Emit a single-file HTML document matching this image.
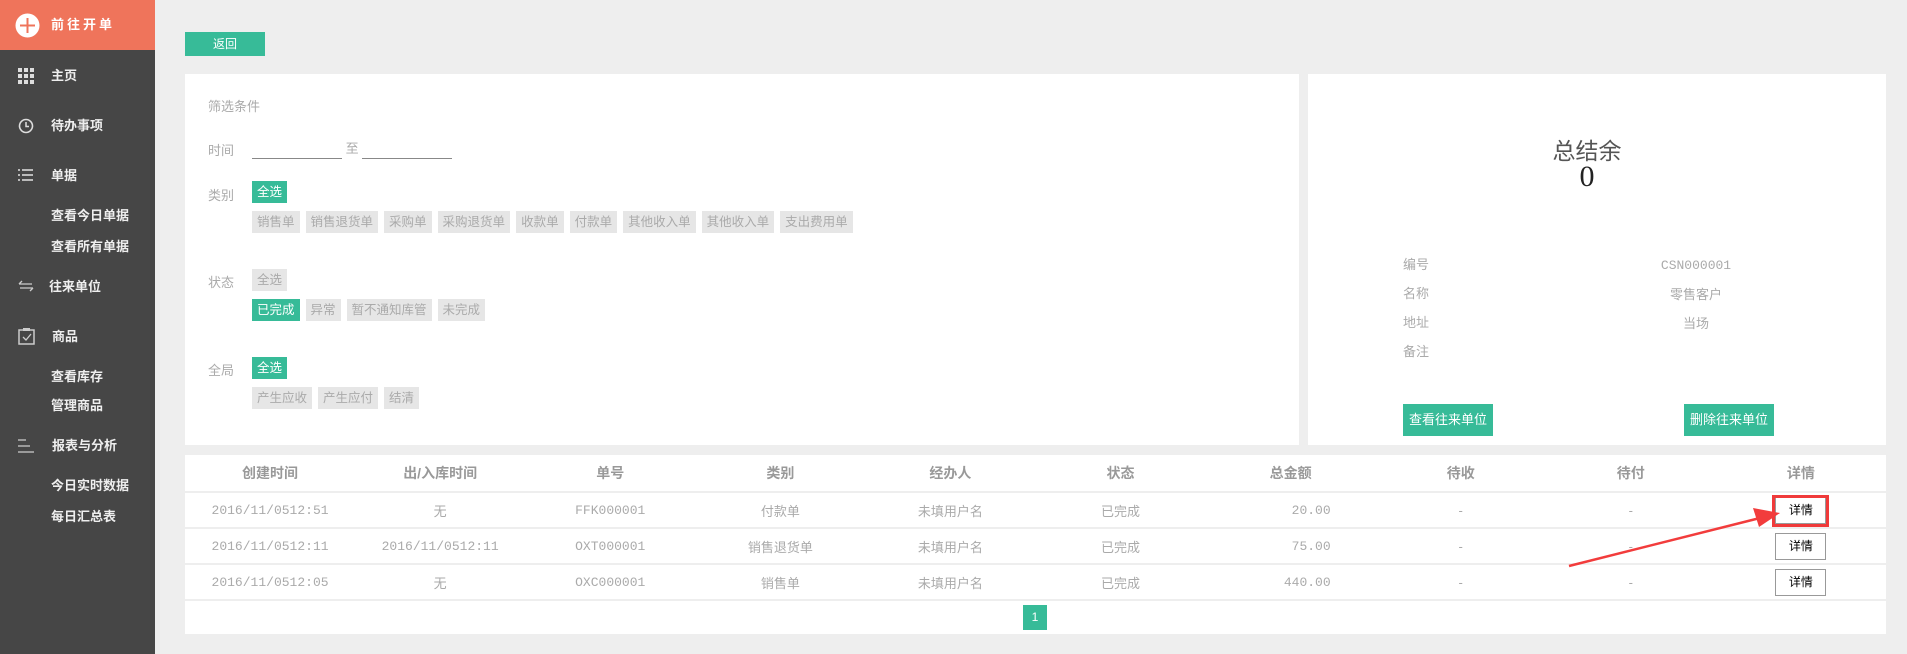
<!DOCTYPE html>
<html><head><meta charset="utf-8"><style>
*{margin:0;padding:0;box-sizing:border-box}
body{width:1907px;height:654px;background:#eeeeee;font-family:"Liberation Sans","Noto Sans CJK SC",sans-serif;position:relative;overflow:hidden;color:#999}
.a{position:absolute}
#side{left:0;top:0;width:155px;height:654px;background:#464646}
#top{left:0;top:0;width:155px;height:50px;background:#ef745b}
.si{position:absolute;left:51px;color:#eee;font-weight:bold;font-size:13px;line-height:16px;white-space:nowrap}
.ic{position:absolute;left:18px}
.btn{background:#37bb98;color:#fff;font-size:12px;text-align:center}
.panel{background:#fff}
.lbl{position:absolute;left:23px;font-size:13px;color:#aaa}
.chip{display:inline-block;height:22px;line-height:22px;padding:0 5px;margin-right:6px;background:#e6e6e6;color:#aaa;font-size:12.5px}
.chip.on{background:#37bb98;color:#fff}
.row{position:absolute;left:67px;white-space:nowrap}
table{border-collapse:collapse;width:100%;table-layout:fixed}
td,th{text-align:center;font-size:13px;color:#999;border-bottom:2px solid #eee}
th{height:37px;font-weight:bold;color:#999;font-size:14px}
td{height:36px;color:#aaa}
.m{font-family:"Liberation Mono",monospace;font-size:13px}
.det{display:inline-block;width:51px;height:27px;line-height:25px;border:1px solid #999;color:#000;font-size:12px;background:#fff}
</style></head><body>
<div id="side" class="a"></div>
<div id="top" class="a"></div>
<svg class="a" style="left:15px;top:13px" width="25" height="25"><circle cx="12.5" cy="12.5" r="12" fill="#fff"/><path d="M12.5 5v15M5 12.5h15" stroke="#ef745b" stroke-width="2"/></svg>
<div class="si" style="top:17px;letter-spacing:3px;color:#fff">前往开单</div>
<svg class="ic" style="top:68px" width="16" height="16" fill="#ddd"><rect x="0" y="0" width="4" height="4"/><rect x="6" y="0" width="4" height="4"/><rect x="12" y="0" width="4" height="4"/><rect x="0" y="6" width="4" height="4"/><rect x="6" y="6" width="4" height="4"/><rect x="12" y="6" width="4" height="4"/><rect x="0" y="12" width="4" height="4"/><rect x="6" y="12" width="4" height="4"/><rect x="12" y="12" width="4" height="4"/></svg>
<div class="si" style="top:68px">主页</div>
<svg class="ic" style="top:118px" width="16" height="16"><circle cx="8" cy="8" r="6.5" stroke="#ddd" stroke-width="1.6" fill="none"/><path d="M8 4v4.5h3" stroke="#ddd" stroke-width="1.5" fill="none"/></svg>
<div class="si" style="top:118px">待办事项</div>
<svg class="ic" style="top:168px" width="16" height="14" fill="#bbb"><rect x="0" y="1" width="2" height="2"/><rect x="0" y="6" width="2" height="2"/><rect x="0" y="11" width="2" height="2"/><rect x="4" y="1" width="11" height="2"/><rect x="4" y="6" width="11" height="2"/><rect x="4" y="11" width="11" height="2"/></svg>
<div class="si" style="top:168px">单据</div>
<div class="si" style="top:208px">查看今日单据</div>
<div class="si" style="top:239px">查看所有单据</div>
<svg class="ic" style="top:280px" width="16" height="12"><path d="M1 4h13M1 4l3-3M15 8H2M15 8l-3 3" stroke="#ccc" stroke-width="1.3" fill="none"/></svg>
<div class="si" style="top:279px;left:49px">往来单位</div>
<svg class="ic" style="top:327px" width="17" height="18"><rect x="1" y="3" width="15" height="14" stroke="#ccc" stroke-width="1.5" fill="none"/><rect x="5" y="1" width="7" height="3" fill="#ccc"/><path d="M5 10l3 3 5-6" stroke="#ccc" stroke-width="1.3" fill="none"/></svg>
<div class="si" style="top:329px;left:52px">商品</div>
<div class="si" style="top:369px">查看库存</div>
<div class="si" style="top:398px">管理商品</div>
<svg class="ic" style="top:439px" width="16" height="14"><path d="M0 1h8M0 7h12M0 13h16" stroke="#ccc" stroke-width="1.3"/></svg>
<div class="si" style="top:438px;left:52px">报表与分析</div>
<div class="si" style="top:478px">今日实时数据</div>
<div class="si" style="top:509px">每日汇总表</div>

<div class="a btn" style="left:185px;top:32px;width:80px;height:24px;line-height:24px">返回</div>

<div class="a panel" style="left:185px;top:74px;width:1114px;height:371px">
<div class="lbl" style="top:22px">筛选条件</div>
<div class="lbl" style="top:66px">时间</div>
<div class="row" style="top:64px;font-size:13px;color:#aaa"><span style="display:inline-block;width:90px;border-bottom:1px solid #888;height:18px;vertical-align:middle"></span> 至 <span style="display:inline-block;width:90px;border-bottom:1px solid #888;height:18px;vertical-align:middle"></span></div>
<div class="lbl" style="top:111px">类别</div>
<div class="row" style="top:107px"><span class="chip on">全选</span></div>
<div class="row" style="top:137px"><span class="chip">销售单</span><span class="chip">销售退货单</span><span class="chip">采购单</span><span class="chip">采购退货单</span><span class="chip">收款单</span><span class="chip">付款单</span><span class="chip">其他收入单</span><span class="chip">其他收入单</span><span class="chip">支出费用单</span></div>
<div class="lbl" style="top:198px">状态</div>
<div class="row" style="top:195px"><span class="chip">全选</span></div>
<div class="row" style="top:225px"><span class="chip on">已完成</span><span class="chip">异常</span><span class="chip">暂不通知库管</span><span class="chip">未完成</span></div>
<div class="lbl" style="top:286px">全局</div>
<div class="row" style="top:283px"><span class="chip on">全选</span></div>
<div class="row" style="top:313px"><span class="chip">产生应收</span><span class="chip">产生应付</span><span class="chip">结清</span></div>
</div>

<div class="a panel" style="left:1308px;top:74px;width:578px;height:371px">
<div class="a" style="left:0;width:558px;top:58px;text-align:center;font-size:23px;color:#555">总结余</div>
<div class="a" style="left:0;width:558px;top:86px;text-align:center;font-size:30px;color:#222;font-family:'Liberation Serif',serif">0</div>
<div class="a" style="left:95px;top:176px;font-size:13px;color:#aaa;line-height:29px">编号<br>名称<br>地址<br>备注</div>
<div class="a" style="left:330px;width:116px;top:176px;font-size:13px;color:#aaa;line-height:29px;text-align:center"><span class="m">CSN000001</span><br>零售客户<br>当场</div>
<div class="a btn" style="left:95px;top:330px;width:90px;height:32px;line-height:32px;font-size:13px">查看往来单位</div>
<div class="a btn" style="left:376px;top:330px;width:90px;height:32px;line-height:32px;font-size:13px">删除往来单位</div>
</div>

<div class="a panel" style="left:185px;top:455px;width:1701px;height:179px">
<table>
<tr><th>创建时间</th><th>出/入库时间</th><th>单号</th><th>类别</th><th>经办人</th><th>状态</th><th>总金额</th><th>待收</th><th>待付</th><th>详情</th></tr>
<tr><td class="m">2016/11/0512:51</td><td>无</td><td class="m">FFK000001</td><td>付款单</td><td>未填用户名</td><td>已完成</td><td class="m" style="text-align:right;padding-right:45px">20.00</td><td>-</td><td>-</td><td><span class="det">详情</span></td></tr>
<tr><td class="m">2016/11/0512:11</td><td class="m">2016/11/0512:11</td><td class="m">OXT000001</td><td>销售退货单</td><td>未填用户名</td><td>已完成</td><td class="m" style="text-align:right;padding-right:45px">75.00</td><td>-</td><td>-</td><td><span class="det">详情</span></td></tr>
<tr><td class="m">2016/11/0512:05</td><td>无</td><td class="m">OXC000001</td><td>销售单</td><td>未填用户名</td><td>已完成</td><td class="m" style="text-align:right;padding-right:45px">440.00</td><td>-</td><td>-</td><td><span class="det">详情</span></td></tr>
</table>
<div class="a btn" style="left:838px;top:150px;width:24px;height:25px;line-height:25px">1</div>
</div>
<div class="a" style="left:1772px;top:495px;width:57px;height:32px;border:3px solid #f03a3a"></div>
<svg class="a" style="left:1560px;top:500px" width="230" height="70"><path d="M9 66L200 18" stroke="#f23c3c" stroke-width="2.5"/><path d="M220 13L193 8L199 27Z" fill="#f23c3c"/></svg>
</body></html>
